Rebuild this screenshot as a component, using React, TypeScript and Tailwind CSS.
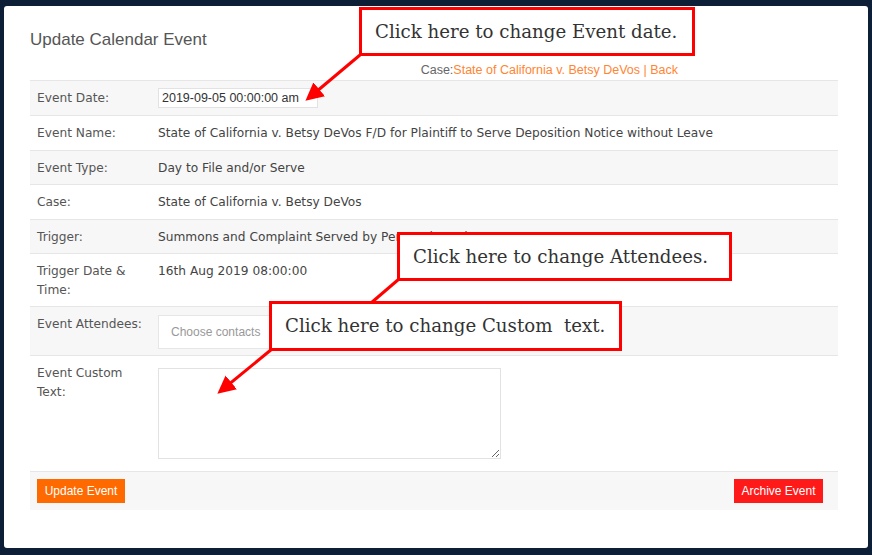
import React from 'react'

const rows: { label: React.ReactNode; value?: string; h: string; bg: boolean; kind?: string }[] = [
  { label: 'Event Date:', h: 'h-[35px]', bg: true, kind: 'date' },
  {
    label: 'Event Name:',
    value: 'State of California v. Betsy DeVos F/D for Plaintiff to Serve Deposition Notice without Leave',
    h: 'h-[35px]',
    bg: false,
  },
  { label: 'Event Type:', value: 'Day to File and/or Serve', h: 'h-[34px]', bg: true },
  { label: 'Case:', value: 'State of California v. Betsy DeVos', h: 'h-[35px]', bg: false },
  { label: 'Trigger:', value: 'Summons and Complaint Served by Personal Service', h: 'h-[34px]', bg: true },
  {
    label: (
      <>
        Trigger Date &amp;
        <br />
        Time:
      </>
    ),
    value: '16th Aug 2019 08:00:00',
    h: 'h-[53px]',
    bg: false,
  },
  { label: 'Event Attendees:', h: 'h-[49px]', bg: true, kind: 'attendees' },
  {
    label: (
      <>
        Event Custom
        <br />
        Text:
      </>
    ),
    h: 'h-[116px]',
    bg: false,
    kind: 'text',
  },
]

const Callout = ({ className, children }: { className: string; children: React.ReactNode }) => (
  <div
    className={`absolute bg-white border-[3px] border-[#ff0000] flex items-center pl-[13px] text-[18.2px] text-[#333] font-['DejaVu_Serif',serif] ${className}`}
  >
    {children}
  </div>
)

export default function App() {
  return (
    <div className="relative w-[872px] h-[555px] bg-[#0c1f36] pt-[6px] px-[4px] pb-[7px] overflow-hidden">
      <div className="h-full bg-white rounded-[3px] font-['Liberation_Sans',Arial,sans-serif]">
        <div className="pl-[26px] pt-[24px] text-[17px] leading-[20px] text-[#555]">Update Calendar Event</div>
        <div className="mt-[13px] w-[674px] text-right text-[12.5px] leading-[14px] text-[#666]">
          Case:<span className="text-[#ff8533]">State of California v. Betsy DeVos | Back</span>
        </div>
        <div className="ml-[26px] mt-[3px] w-[808px] font-['DejaVu_Sans',sans-serif] text-[12.2px] leading-[19px]">
          {rows.map((r, i) => (
            <div
              key={i}
              className={`flex border-t border-[#e6e6e6] ${r.h} ${r.bg ? 'bg-[#f7f7f7]' : 'bg-white'}`}
            >
              <div className={`w-[128px] pl-[7px] text-[#555] ${r.kind === 'text' ? 'pt-[8px]' : 'pt-[8px]'}`}>
                {r.label}
              </div>
              <div className="flex-1 text-[#444]">
                {r.kind === 'date' && (
                  <div className="mt-[7px] w-[160px] h-[20px] bg-white border border-[#e2e2e2] pl-[3px] font-['Liberation_Sans',Arial,sans-serif] text-[12.5px] leading-[18px] text-[#333]">
                    2019-09-05 00:00:00 am
                  </div>
                )}
                {r.kind === 'attendees' && (
                  <div className="mt-[8px] w-[300px] h-[34px] bg-white border border-[#e6e6e6] pl-[12px] flex items-center font-['Liberation_Sans',Arial,sans-serif] text-[12px] text-[#999]">
                    Choose contacts
                  </div>
                )}
                {r.kind === 'text' && (
                  <textarea className="mt-[12px] w-[343px] h-[91px] border border-[#e2e2e2] bg-white outline-none resize" />
                )}
                {!r.kind && <div className="pt-[8px]">{r.value}</div>}
              </div>
            </div>
          ))}
          <div className="flex justify-between items-center h-[39px] bg-[#f7f7f7] border-t border-[#e6e6e6] pl-[7px] pr-[15px] font-['Liberation_Sans',Arial,sans-serif] text-[12px]">
            <button className="h-[24px] w-[88px] bg-[#ff6a00] text-white">Update Event</button>
            <button className="h-[24px] w-[89px] bg-[#ff1a1a] text-white">Archive Event</button>
          </div>
        </div>
      </div>

      <svg className="absolute left-0 top-0 pointer-events-none" width="872" height="555">
        <defs>
          <marker id="ah" markerWidth="6" markerHeight="6" refX="4" refY="3" orient="auto">
            <path d="M0,0 L6,3 L0,6 z" fill="#ff0000" />
          </marker>
        </defs>
        <line x1="360" y1="55" x2="310" y2="97" stroke="#ff0000" strokeWidth="3" markerEnd="url(#ah)" />
        <line x1="399" y1="279" x2="371" y2="303" stroke="#ff0000" strokeWidth="3" />
        <line x1="272" y1="349" x2="222" y2="390" stroke="#ff0000" strokeWidth="3" markerEnd="url(#ah)" />
      </svg>

      <Callout className="left-[359px] top-[7px] w-[336px] h-[49px]">Click here to change Event date.</Callout>
      <Callout className="left-[397px] top-[232px] w-[335px] h-[49px]">Click here to change Attendees.</Callout>
      <Callout className="left-[269px] top-[301px] w-[353px] h-[50px]">Click here to change Custom&nbsp; text.</Callout>
    </div>
  )
}
